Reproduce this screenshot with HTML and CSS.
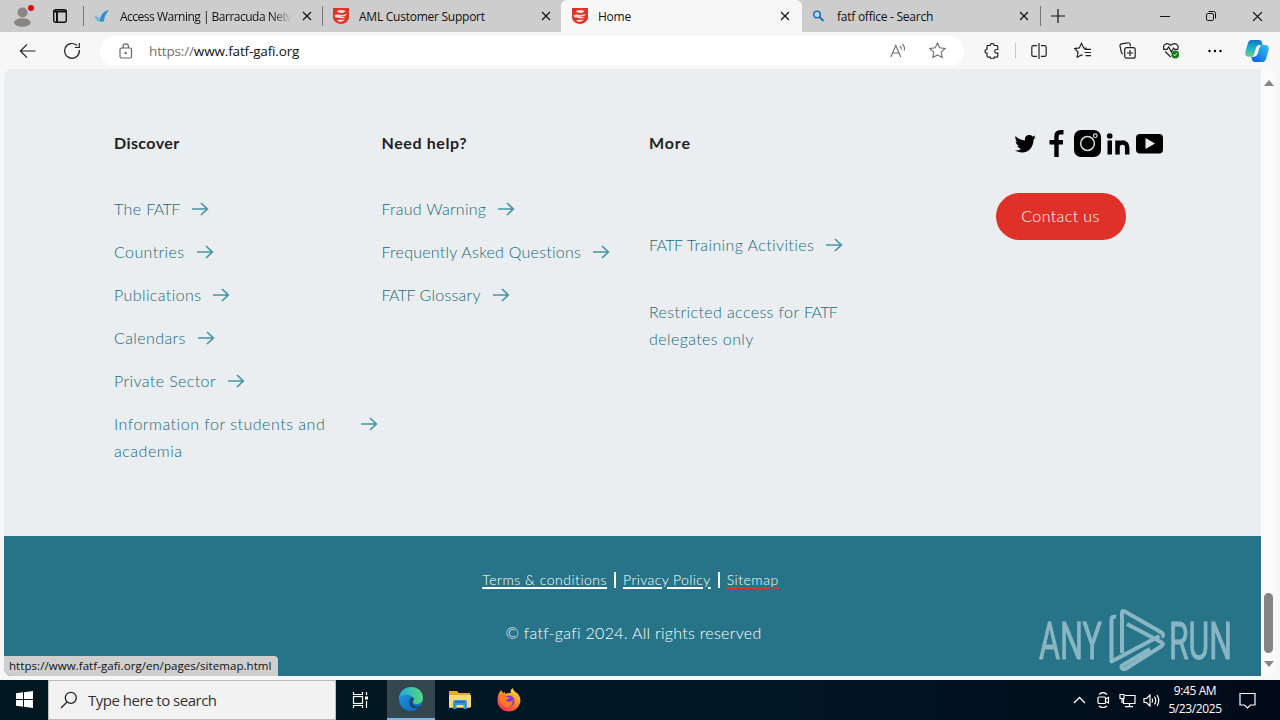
FILE: index.html
```html
<!DOCTYPE html>
<html lang="en">
<head>
  <meta charset="UTF-8" />
  <meta name="viewport" content="width=device-width, initial-scale=1.0" />
  <title>Home</title>
  <link rel="stylesheet" href="styles.css">
</head>
<body>

  <!-- shared shapes -->
  <svg class="defs" width="0" height="0">
    <defs>
      <linearGradient id="edgeBlue" x1="0" y1="0" x2="1" y2="1"><stop offset="0" stop-color="#1b9de2" /><stop offset="1" stop-color="#1460b4" /></linearGradient>
      <linearGradient id="edgeGreen" x1="0" y1="0" x2="1" y2="0"><stop offset="0" stop-color="#25a9df" /><stop offset="1" stop-color="#55d875" /></linearGradient>
      <linearGradient id="fox" x1="0.8" y1="0" x2="0.2" y2="1"><stop offset="0" stop-color="#ffe63d" /><stop offset="0.45" stop-color="#ff8a1f" /><stop offset="1" stop-color="#f0245f" /></linearGradient>
      <linearGradient id="copA" x1="0" y1="0" x2="0" y2="1"><stop offset="0" stop-color="#1672c4" /><stop offset="0.5" stop-color="#22b0c8" /><stop offset="1" stop-color="#6bd47c" /></linearGradient>
      <linearGradient id="copB" x1="1" y1="0" x2="0" y2="1"><stop offset="0" stop-color="#2ec4f2" /><stop offset="1" stop-color="#1557e0" /></linearGradient>
      <symbol id="arrow" viewBox="0 0 18 14"><path d="M1 7h15M10 1l6.3 6-6.3 6" fill="none" stroke="#4796a5" stroke-width="1.7" /></symbol>
      <symbol id="close" viewBox="0 0 10 10"><path d="M1 1l8 8M9 1L1 9" fill="none" stroke="#111" stroke-width="1.2" /></symbol>
      <symbol id="shield" viewBox="0 0 16 16">
        <path d="M0 0h16v9c0 4-4 7-8 7S0 13 0 9z" fill="#dc3529" />
        <path d="M4 3.500c2-1.800 6-1.800 8.500-.3-2 2.300-6 2.300-8.500.3zM1.500 7.500C5 5 8 8.500 14 5.800c-1.500 3.500-4.500 2.400-7 2.200 2 .8 4.500 1.700 6 .8-3 3-7 .2-10.500.7zM4 12.500c3-1.800 4.500.3 8-1.500-1 2.500-5 4-8 1.500z" fill="#f8dfdc" />
      </symbol>
    </defs>
  </svg>

  <!-- Tab strip -->
  <div class="tabstrip">
    <div class="profile">
      <svg width="18" height="22" viewBox="0 0 18 22"><circle cx="9.500" cy="6.500" r="5" fill="#8a8582" /><ellipse cx="9.300" cy="16.500" rx="8.300" ry="4.300" fill="#8a8582" /></svg>
      <span class="dot"></span>
    </div>
    <div class="tab-actions">
      <svg width="14" height="14" viewBox="0 0 14 14"><rect x=".7" y=".7" width="12.600" height="12.600" rx="2" fill="none" stroke="#111" stroke-width="1.400" /><path d="M.7 2.500h12.600M4 3v10" stroke="#111" stroke-width="2" /></svg>
    </div>
    <div class="tab">
      <svg class="favicon" width="16" height="16" viewBox="0 0 16 16"><path d="M15 2C9 3 6 8 5.500 13.500H10C10 9 12 5 15 2z" fill="#2d8fd0" /><path d="M0 8l4 5.500h1.500L4.800 9z" fill="#70b3dc" /></svg>
      <span class="tab-title fade">Access Warning | Barracuda Netw</span>
      <svg class="x" width="10" height="10"><use href="#close" /></svg>
    </div>
    <div class="tab">
      <svg class="favicon" width="16" height="16"><use href="#shield" /></svg>
      <span class="tab-title">AML Customer Support</span>
      <svg class="x" width="10" height="10"><use href="#close" /></svg>
    </div>
    <div class="tab active">
      <svg class="favicon" width="16" height="16"><use href="#shield" /></svg>
      <span class="tab-title">Home</span>
      <svg class="x" width="10" height="10"><use href="#close" /></svg>
    </div>
    <div class="tab last">
      <svg class="favicon" width="16" height="16" viewBox="0 0 16 16"><circle cx="6" cy="6.500" r="3.300" fill="#b9dcf5" stroke="#2c6cb5" stroke-width="1.600" /><path d="M8.500 9l4 4" stroke="#2c6cb5" stroke-width="2" /></svg>
      <span class="tab-title">fatf office - Search</span>
      <svg class="x" width="10" height="10"><use href="#close" /></svg>
    </div>
    <div class="new-tab"><svg width="14" height="14" viewBox="0 0 14 14"><path d="M7 0v14M0 7h14" stroke="#111" stroke-width="1.200" /></svg></div>
    <div class="window-buttons">
      <span><svg width="10" height="10" viewBox="0 0 10 10"><path d="M0 5.500h10" stroke="#111" /></svg></span>
      <span><svg width="10" height="10" viewBox="0 0 10 10" fill="none" stroke="#111"><rect x=".5" y="2.500" width="7" height="7" rx="1.300" /><path d="M2.500 .5h5a2 2 0 0 1 2 2v5" /></svg></span>
      <span><svg width="11" height="11"><use href="#close" /></svg></span>
    </div>
  </div>

  <!-- Toolbar -->
  <div class="toolbar">
    <span class="tool back"><svg width="18" height="16" viewBox="0 0 18 16" fill="none" stroke="#222" stroke-width="1.200"><path d="M16.500 8H1.500M8 1.300L1.400 8 8 14.700" /></svg></span>
    <span class="tool"><svg width="18" height="18" viewBox="0 0 18 18" fill="none" stroke="#222" stroke-width="1.200"><path d="M16.300 8A7.400 7.400 0 1 1 14 3.500M16.300 1v4.500h-4.500" /></svg></span>
    <div class="address">
      <svg width="14" height="16" viewBox="0 0 14 16" fill="none" stroke="#666" stroke-width="1.200"><rect x="1" y="5" width="11.500" height="10" rx="1.500" /><path d="M4 5V3.500a2.700 2.700 0 0 1 5.400 0V5" /><circle cx="6.700" cy="10" r=".6" fill="#666" /></svg>
      <span class="url"><span class="scheme">https://</span>www.fatf-gafi.org</span>
      <svg class="read" width="17" height="16" viewBox="0 0 17 16" fill="none" stroke="#707070" stroke-width="1.100"><path d="M.8 14L5.800 2.500l5 11.500M2.500 10h6.600M10 3c1.200 1 1.500 2.200 1.300 3.500M12.300 1c2 1.700 2.500 4 2 6.500" /></svg>
      <svg class="star" width="17" height="17" viewBox="0 0 17 17" fill="none" stroke="#707070" stroke-width="1.100"><path d="M8.500 1l2.300 4.800 5.300.7-3.900 3.700 1 5.300-4.700-2.600-4.700 2.600 1-5.300L.9 6.500l5.300-.7z" /></svg>
    </div>
    <div class="tools">
      <span class="tool"><svg width="16" height="16" viewBox="0 0 16 16" fill="none" stroke="#222" stroke-width="1.200"><path d="M3.500 2.500h2.700a2 2 0 0 1 4 0h2.600q1 0 1 1v3h-1.300a1.800 1.800 0 0 0 0 3.600h1.300v3q0 1-1 1h-2.600a2 2 0 0 1-4 0H4.500q-1.500 0-1.500-1.300v-2.500a2 2 0 0 1 0-4V3.500z" /></svg></span>
      <span class="divider"></span>
      <span class="tool"><svg width="16" height="16" viewBox="0 0 16 16" fill="none" stroke="#222" stroke-width="1.200"><path d="M6 2.600H2.500a1.700 1.700 0 0 0-1.700 1.700v7.400a1.700 1.700 0 0 0 1.700 1.700H6M10 2.600h3.500a1.700 1.700 0 0 1 1.700 1.700v7.400a1.700 1.700 0 0 1-1.700 1.700H10M8 0v16" /></svg></span>
      <span class="tool"><svg width="18" height="17" viewBox="0 0 18 17" fill="none" stroke="#222" stroke-width="1.200"><path d="M12.500 6.300l-2.800-.4L7.500 1.300 5.300 5.900l-4.600.7L4 10l-.8 5.200 4.300-2.300 1 .5M10.500 7.300H17M10.500 10.500H17M11.500 13.700H17" /></svg></span>
      <span class="tool"><svg width="17" height="17" viewBox="0 0 17 17" fill="none" stroke="#222" stroke-width="1.200"><rect x="5.700" y="5.700" width="10.500" height="10.500" rx="2" /><path d="M11 8v6M8 11h6M4 12a2.500 2.500 0 0 1-1.700-1.900L1 4.200a2 2 0 0 1 1.500-2.300L8.700.8a2 2 0 0 1 2.400 1.500l.5 2" /></svg></span>
      <span class="tool"><svg width="18" height="17" viewBox="0 0 18 17" fill="none" stroke="#222" stroke-width="1.200"><path d="M2 7C.2 3 4.500-.5 8.700 3.300 13-.5 17.500 3 15.700 7M3.200 9.500l5.500 5.500M1 7.300h4L6.700 5l2.600 5 2.200-4 1 1.300h3.700" /><circle cx="13.200" cy="12.500" r="3.900" fill="#187c1b" stroke="none" /><path d="M11.400 12.500l1.300 1.300 2.300-2.500" stroke="#fff" stroke-width="1" /></svg></span>
      <span class="tool"><svg width="14" height="4" viewBox="0 0 14 4"><circle cx="1.500" cy="2" r="1.200" /><circle cx="7" cy="2" r="1.200" /><circle cx="12.500" cy="2" r="1.200" /></svg></span>
      <span class="tool copilot"><svg width="24" height="22" viewBox="0 0 24 22"><path d="M6 0h8c2 0 2.700 1 3.200 3l.5 2h-3.200c-2 0-2.900 1-3.500 3l-1.800 6c-.6 2-1.300 2.700-3 2.700H3.500C.5 16.700-.3 14 .5 11.500L2.800 3.500C3.500 1.300 4.500 0 6 0z" fill="url(#copA)" /><path d="M18 22h-8c-2 0-2.700-1-3.200-3l-.5-2.300h2.500c2 0 2.900-1 3.500-3l1.800-6c.6-2 1.300-2.700 3-2.700h3.400c3 0 3.800 2.700 3 5.200l-2.300 8C20.500 20.700 19.500 22 18 22z" fill="url(#copB)" /><path d="M12.500 8c.4-1.300 1-2 2-2h.7c-.8.500-1.100 1.200-1.500 2.500l-1.500 5c-.4 1.300-1.100 2-2.200 2h-.6c.8-.5 1.200-1.200 1.500-2.200z" fill="#f7f7f7" stroke="#f7f7f7" /></svg></span>
    </div>
  </div>

  <!-- Page -->
  <div class="viewport">
    <div class="page">
      <footer class="footer">
        <div class="col">
          <h4>Discover</h4>
          <ul>
            <li><a>The <b>FATF</b></a><svg width="18" height="14"><use href="#arrow" /></svg></li>
            <li><a>Countries</a><svg width="18" height="14"><use href="#arrow" /></svg></li>
            <li><a>Publications</a><svg width="18" height="14"><use href="#arrow" /></svg></li>
            <li><a>Calendars</a><svg width="18" height="14"><use href="#arrow" /></svg></li>
            <li><a>Private Sector</a><svg width="18" height="14"><use href="#arrow" /></svg></li>
            <li><a class="wide">Information for students and academia</a><svg width="18" height="14"><use href="#arrow" /></svg></li>
          </ul>
        </div>
        <div class="col help">
          <h4>Need help?</h4>
          <ul>
            <li><a>Fraud Warning</a><svg width="18" height="14"><use href="#arrow" /></svg></li>
            <li><a>Frequently Asked Questions</a><svg width="18" height="14"><use href="#arrow" /></svg></li>
            <li><a><b>FATF</b> Glossary</a><svg width="18" height="14"><use href="#arrow" /></svg></li>
          </ul>
        </div>
        <div class="col more">
          <h4>More</h4>
          <ul>
            <li><a><b>FATF</b> Training Activities</a><svg width="18" height="14"><use href="#arrow" /></svg></li>
          </ul>
          <p>Restricted access for <b>FATF</b> delegates only</p>
        </div>
        <div class="contact">
          <div class="social">
            <svg width="27" height="27" viewBox="0 0 27 27"><path d="M3.500 6c2.500 2.800 5.500 4.300 9.500 4.500-.7-3 1-5.500 4.200-5.500 1.300 0 2.400.5 3.200 1.400 1-.2 1.900-.6 2.700-1-.3 1-1 1.900-1.800 2.400.9-.1 1.700-.3 2.500-.7-.6.900-1.300 1.600-2.200 2.300C21.500 16 17.500 22.500 10 22.500c-2.600 0-4.900-.7-7-2 2.300.2 4.500-.4 6.300-1.800-1.900-.1-3.400-1.300-4-3h1.900c-2-.5-3.500-2.200-3.500-4.400.6.300 1.200.5 2 .5C3.700 10.500 3 8.300 3.500 6z" /></svg>
            <svg width="27" height="27" viewBox="0 0 27 27"><path d="M20.500 2.200h-2.700c-3.300 0-4.300 1.500-4.300 4.300V27M6.500 12.200h13.500" fill="none" stroke="#000" stroke-width="4.400" /></svg>
            <svg width="27" height="27" viewBox="0 0 27 27"><rect width="27" height="27" rx="7" /><circle cx="13.500" cy="13.500" r="6.900" fill="none" stroke="#d8dcde" stroke-width="1.500" /><circle cx="21.300" cy="5.700" r="1.800" fill="none" stroke="#d8dcde" stroke-width="1.200" /></svg>
            <svg width="27" height="27" viewBox="0 0 27 27"><circle cx="4.700" cy="6" r="2.800" /><rect x="2.500" y="10.500" width="4.500" height="14" /><path d="M12.500 24.500v-14M12.500 17.500c0-6.500 9.700-7 9.700 0v7" fill="none" stroke="#000" stroke-width="4.500" /></svg>
            <svg width="27" height="27" viewBox="0 0 27 27"><rect y="4" width="27" height="19.500" rx="4" /><path d="M9.500 8v11l9.500-5.500z" fill="#eaeef1" /></svg>
          </div>
          <button class="contact-btn">Contact us</button>
        </div>
      </footer>
      <div class="legal">
        <div class="legal-links"><a class="terms">Terms &amp; conditions</a><i></i><a class="privacy">Privacy Policy</a><i></i><a class="sitemap">Sitemap</a></div>
        <p>© fatf-gafi 2024. All rights reserved</p>
      </div>
      <div class="status-url">https://www.fatf-gafi.org/en/pages/sitemap.html</div>
      <svg class="watermark" width="200" height="64" viewBox="0 0 200 64">
        <text x="4" y="49.500" textLength="63" lengthAdjust="spacingAndGlyphs">ANY</text>
        <text x="134" y="49.500" textLength="63" lengthAdjust="spacingAndGlyphs">RUN</text>
        <g fill="none" stroke="#a9cdd6" stroke-width="4" stroke-linejoin="round">
          <path d="M81 8c-3-1-4.500 0-4.500 3v41.500l48-25.500" />
          <path d="M87 44V3.500c0-1.500 1-2 2.500-1.200l37 21.200c2 1.200 2 3.500 0 4" />
          <path d="M92 15l34 18c2.500 1.300 2.500 3 0 4.500L91 59.500c-2.500 1.500-5 0-4.500-2.500L115 40" />
        </g>
      </svg>
    </div>
    <div class="scrollbar">
      <svg width="10" height="6" viewBox="0 0 10 6"><path d="M0 6l5-6 5 6z" fill="#858585" /></svg>
      <span class="thumb"></span>
      <svg width="10" height="6" viewBox="0 0 10 6"><path d="M0 0l5 6 5-6z" fill="#858585" /></svg>
    </div>
  </div>

  <!-- Taskbar -->
  <div class="taskbar">
    <div class="start"><svg width="17" height="17" viewBox="0 0 17 17" fill="#fff"><path d="M0 2.300L7 1.300V8H0zM8 1.200L17 0v8H8zM0 9h7v6.800l-7-1zM8 9h9v8l-9-1.200z" /></svg></div>
    <div class="search">
      <svg width="18" height="18" viewBox="0 0 18 18" fill="none" stroke="#222" stroke-width="1.300"><circle cx="10.800" cy="6.800" r="5.500" /><path d="M7 11L1 17" /></svg>
      <span>Type here to search</span>
    </div>
    <div class="app view"><svg width="17" height="16" viewBox="0 0 17 16" fill="none" stroke="#fff" stroke-width="1.200"><rect x="1.500" y="4.500" width="9" height="7" /><path d="M1.500 0v2.500h9V0M1.500 16v-2.500h9V16M14.500 0v3M14.500 9v7" /><path d="M13 6h3" stroke-width="3" /></svg></div>
    <div class="app edge"><svg width="24" height="24" viewBox="0 0 24 24"><circle cx="12" cy="12" r="12" fill="url(#edgeBlue)" /><path d="M0 11C1 4 6 0 12 0c7 0 12 5 12 10.500 0 4.500-3 6.500-6.500 6.500-3 0-4-1.500-3.500-2.500 1-1 1-2 .7-3C13 7 4 6 0 11z" fill="url(#edgeGreen)" /><path d="M12 11c-4 4-1 11 6 10.500 2-.2 3.600-1.200 4.500-2.500-4 1.500-9 .3-9-4 0-1.500 1.500-2 1.200-3.500-.3-1.400-1.700-1.500-2.700-.5z" fill="#16476f" /></svg></div>
    <div class="app"><svg width="22" height="20" viewBox="0 0 22 20"><path d="M0 1h8l2 2h11v15H0z" fill="#eba733" /><path d="M0 5h22v12H0z" fill="#fadb71" /><path d="M4 19v-7q0-2 2-2h10q2 0 2 2v7h-3.500v-4h-7v4z" fill="#3b94d4" /><path d="M6 12h10" stroke="#2474b5" stroke-width="2" /></svg></div>
    <div class="app"><svg width="24" height="24" viewBox="0 0 24 24"><path d="M2 5l2-3 2 3 2-1v2c2-1 4-1 6-1-1-2 0-4 2-5 0 3 3 4 5 6 2 2.500 3 6 2 9-1.500 5-6 8.500-11 8.500C5.500 23.500.5 18.500.5 13c0-3 .5-6 1.500-8z" fill="url(#fox)" /><circle cx="12" cy="13" r="5.500" fill="#7b38d8" /><path d="M3 8c3-1 5 0 6 1 2-.3 3 .5 4 1.500-2 .2-3 1-4 2 2 1.500 5 2 6.500-.5 1 5-3 7.500-6.500 7-4-.5-6.500-5-6-11z" fill="#ff7b27" /></svg></div>
    <div class="tray">
      <span><svg width="13" height="8" viewBox="0 0 13 8"><path d="M1 7l5.500-5.500L12 7" fill="none" stroke="#fff" stroke-width="1.300" /></svg></span>
      <span><svg width="13" height="16" viewBox="0 0 13 16" fill="none" stroke="#fff" stroke-width="1.200"><rect x="1" y="5" width="7.500" height="6.500" rx="1" /><path d="M8.500 7l3-1.500v5.500l-3-1.500M2 2.500C4.500 0 7.500 0 10 2.500M2 14C4.500 16 7.500 16 10 14" /></svg></span>
      <span><svg width="17" height="15" viewBox="0 0 17 15" fill="none" stroke="#fff" stroke-width="1.200"><path d="M6 2.500h10v8H4.500V6M10.500 10.500v3M6 13.700h8M1 1.500h4v4H1zM3 5.500V10" /></svg></span>
      <span><svg width="17" height="13" viewBox="0 0 17 13" fill="none" stroke="#fff" stroke-width="1.200"><path d="M1 4.500h2.500L7 1v11L3.500 8.500H1zM9 4.500q1.300 2 0 4M11.500 2.700q2.500 3.800 0 7.600M14 1q3.500 5.500 0 11" /></svg></span>
    </div>
    <div class="clock"><span>9:45 AM</span><span>5/23/2025</span></div>
    <div class="notice"><svg width="17" height="17" viewBox="0 0 17 17" fill="none" stroke="#fff" stroke-width="1.200"><path d="M1 1.500h15v11.500h-4.500l-3 3-3-3H1z" /></svg></div>
  </div>

</body>
</html>
```
FILE: styles.css
```css
* {
  box-sizing: border-box;
}

body {
  margin: 0;
  width: 1280px;
  height: 720px;
  overflow: hidden;
  background: #f7f7f7;
  font-family: "Open Sans", "Noto Sans", sans-serif;
  color: #111;
}

svg {
  flex: none;
  display: block;
}

.defs {
  position: absolute;
}

/* Tab strip */
.tabstrip {
  display: flex;
  height: 32px;
  background: #cdcdcd;
  font-size: 12px;
}

.profile {
  position: relative;
  width: 44px;
  padding: 6px 0 0 13px;
}

.dot {
  position: absolute;
  left: 28px;
  top: 5px;
  width: 6px;
  height: 6px;
  border-radius: 50%;
  background: #e30613;
}

.tab-actions {
  width: 40px;
  padding: 9px 0 0 9px;
  background: linear-gradient(#777, #777) right 6px / 1px 20px no-repeat;
}

.tab {
  display: flex;
  align-items: center;
  width: 239px;
  padding: 0 11px 0 10px;
  background: linear-gradient(#777, #777) right 6px / 1px 20px no-repeat;
}

.tab:nth-of-type(4) {
  width: 238px;
  padding-right: 10px;
  background: none;
}

.tab.active {
  width: 241px;
  padding: 0 12px 0 11px;
  background: #f7f7f7;
  border-radius: 6px 6px 0 0;
}

.tab .favicon {
  margin-right: 10px;
}

.tab.last {
  padding: 0 12px 0 9px;
}

.tab-title {
  flex: 1;
  overflow: hidden;
  white-space: nowrap;
  letter-spacing: -0.25px;
}

.tab-title.fade {
  letter-spacing: -0.5px;
  -webkit-mask-image: linear-gradient(90deg, #000 88%, transparent);
  mask-image: linear-gradient(90deg, #000 88%, transparent);
}

.tab .x {
  margin-left: 10px;
}

.new-tab {
  width: 101px;
  padding: 9px 0 0 10px;
}

.window-buttons {
  display: flex;
}

.window-buttons span {
  display: flex;
  align-items: center;
  justify-content: center;
  width: 46px;
}

/* Toolbar */
.toolbar {
  display: flex;
  align-items: center;
  height: 37px;
  padding-left: 6px;
}

.tool {
  display: flex;
  align-items: center;
  justify-content: center;
  width: 44px;
  height: 30px;
}

.address {
  display: flex;
  align-items: center;
  width: 864px;
  height: 30px;
  margin-left: 6px;
  padding: 0 18px 0 19px;
  border-radius: 15px;
  background: #fff;
}

.url {
  margin-left: 16px;
  font-size: 13.5px;
  letter-spacing: -0.15px;
}

.scheme {
  color: #707070;
}

.read {
  margin-left: auto;
}

.star {
  margin-left: 22px;
}

.tools {
  display: flex;
  align-items: center;
  margin-left: 6px;
}

.divider {
  width: 1px;
  height: 15px;
  margin: 0 1px;
  background: #c8c8c8;
}

.copilot {
  width: 40px;
}

/* Page area */
.viewport {
  display: flex;
  width: 1272px;
  height: 607px;
  margin: 0 4px;
  border-radius: 8px;
  overflow: hidden;
}

.page {
  position: relative;
  width: 1257px;
}

.footer {
  display: flex;
  height: 467px;
  padding: 60px 0 0 110px;
  background: #eaeef1;
  font-family: Lato, "Open Sans", sans-serif;
  font-size: 16px;
  line-height: 27px;
}

.col {
  width: 267.5px;
}

.col h4 {
  margin: 0 0 39px;
  font-size: 16px;
  font-weight: 700;
  letter-spacing: 0.4px;
  color: #222;
}

.col.help h4 {
  letter-spacing: 0.6px;
}

.col.more h4 {
  letter-spacing: 0.9px;
}

.col ul {
  margin: 0;
  padding: 0;
  list-style: none;
}

.col li {
  display: flex;
  align-items: flex-start;
  margin-bottom: 16px;
  width: 264px;
  color: #20687b;
}

.col a,
.col p {
  font-weight: 300;
  letter-spacing: 0.4px;
}

.col b {
  font-weight: 300;
  letter-spacing: -0.6px;
}

.col a.wide {
  letter-spacing: 0.52px;
}

.col.help a {
  letter-spacing: 0.26px;
}

.col li svg {
  margin: 7px 0 0 11px;
}

.more ul {
  margin-top: 75px;
}

.more p {
  width: 210px;
  margin: 40px 0 0;
  color: #20687b;
}

.contact {
  margin: 1px 0 0 79px;
}

.social {
  display: flex;
  gap: 4px;
  padding-left: 16px;
}

.contact-btn {
  display: block;
  width: 130px;
  height: 47px;
  margin-top: 36px;
  padding: 0 0 2px;
  border: none;
  border-radius: 24px;
  background: #df3127;
  color: #fff;
  font-family: Lato, "Open Sans", sans-serif;
  font-size: 16px;
  font-weight: 300;
  letter-spacing: 0.4px;
}

.legal {
  display: flex;
  flex-direction: column;
  align-items: center;
  height: 140px;
  padding-top: 34px;
  background: #277488;
  color: #fff;
  font-family: Lato, "Open Sans", sans-serif;
  font-weight: 300;
}

.legal-links {
  display: flex;
  align-items: center;
  height: 20px;
  padding-right: 4px;
  font-size: 14px;
  letter-spacing: 0.52px;
}

.legal-links a {
  text-decoration: underline;
  text-decoration-thickness: 2px;
  text-underline-offset: 2px;
  white-space: nowrap;
  margin-top: -2px;
}

.legal-links .privacy {
  letter-spacing: 0.4px;
}

.legal-links .sitemap {
  text-decoration-color: #df3127;
}

.legal-links i {
  width: 2px;
  height: 16px;
  margin: 0 7px;
  background: #fff;
}

.legal p {
  margin: 31px 0 0;
  padding-left: 2px;
  font-size: 16px;
  line-height: 24px;
  letter-spacing: 0.3px;
}

.status-url {
  position: absolute;
  left: 0;
  bottom: 0;
  width: 274px;
  height: 20px;
  padding-left: 5px;
  border-radius: 0 4px 0 0;
  background: #cfcfcf;
  font-size: 11.5px;
  letter-spacing: 0.06px;
  line-height: 20px;
  white-space: nowrap;
}

.watermark {
  position: absolute;
  left: 1031px;
  top: 540px;
  opacity: 0.75;
  overflow: visible;
}

.watermark text {
  font-family: Roboto, sans-serif;
  font-size: 51px;
  fill: #a9cdd6;
  stroke: #a9cdd6;
  stroke-width: 0.9px;
}

.scrollbar {
  display: flex;
  flex-direction: column;
  align-items: center;
  width: 15px;
  padding: 11px 0 9px;
  background: #fbfbfb;
}

.thumb {
  width: 9px;
  height: 60px;
  margin: auto 0 8px;
  border-radius: 5px;
  background: #858585;
}

/* Taskbar */
.taskbar {
  display: flex;
  height: 40px;
  margin-top: 4px;
  background: linear-gradient(90deg, #011820, #011624 60%, #020a18);
  color: #fff;
}

.start {
  width: 48px;
  padding: 11px 0 0 16px;
}

.search {
  display: flex;
  align-items: center;
  width: 288px;
  padding-left: 11px;
  border: 1px solid #bbb;
  background: #f2f2f2;
  color: #333;
  font-size: 15px;
}

.search span {
  margin-left: 10px;
  letter-spacing: -0.5px;
}

.app {
  display: flex;
  align-items: center;
  justify-content: center;
  width: 49px;
}

.app.view {
  width: 51px;
  padding-right: 3px;
}

.app.edge {
  width: 48px;
  background: #35474e;
  border-bottom: 2px solid #76b9ed;
}

.tray {
  display: flex;
  margin-left: auto;
}

.tray span {
  display: flex;
  align-items: center;
  justify-content: center;
  width: 24px;
}

.clock {
  display: flex;
  flex-direction: column;
  align-items: center;
  width: 64px;
  padding-top: 2px;
  font-size: 12px;
  line-height: 18px;
  letter-spacing: -0.4px;
}

.notice {
  width: 53px;
  padding: 12px 0 0 12px;
}
```
